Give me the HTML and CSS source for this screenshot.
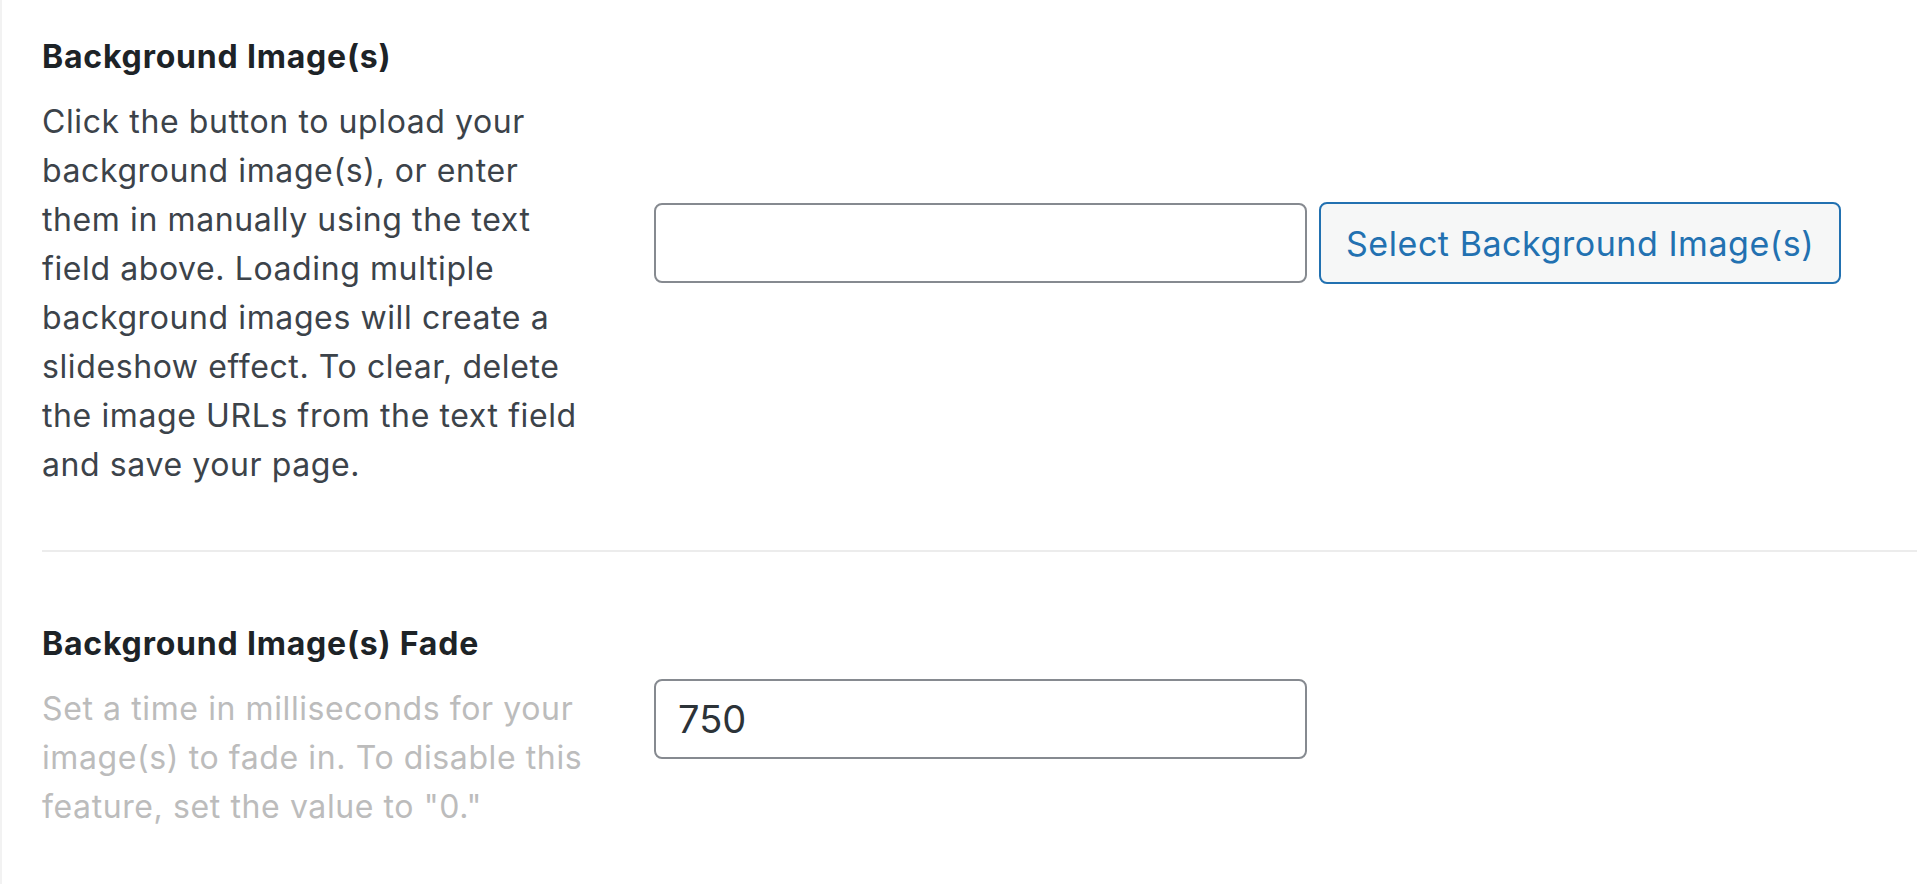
FILE: index.html
```html
<!DOCTYPE html>
<html lang="en">
<head>
<meta charset="utf-8">
<title>Background Image Settings</title>
<link rel="stylesheet" href="styles.css">
</head>
<body>
<div class="panel">
  <div class="row row-first">
    <div class="label-col">
      <h3 class="label">Background Image(s)</h3>
      <p class="desc">Click the button to upload your background image(s), or enter them in manually using the text field above. Loading multiple background images will create a slideshow effect. To clear, delete the image URLs from the text field and save your page.</p>
    </div>
    <div class="field-col field-first">
      <input class="text-input" type="text" value="">
      <button class="btn" type="button">Select Background Image(s)</button>
    </div>
  </div>
  <div class="row row-second">
    <div class="label-col">
      <h3 class="label">Background Image(s) Fade</h3>
      <p class="desc desc-muted">Set a time in milliseconds for your image(s) to fade in. To disable this feature, set the value to "0."</p>
    </div>
    <div class="field-col field-second">
      <input class="text-input" type="text" value="750">
    </div>
  </div>
</div>
</body>
</html>
```

FILE: styles.css
```css
html, body {
  margin: 0;
  padding: 0;
  background: #ffffff;
}

body {
  font-family: Inter, "Noto Sans", "Liberation Sans", sans-serif;
  color: #3c434a;
}

.panel {
  border-left: 2px solid #f2f2f2;
  padding-left: 40px;
  min-height: 884px;
  box-sizing: border-box;
}

.row {
  display: flex;
  align-items: flex-start;
}

.row-first {
  padding-top: 37px;
  padding-bottom: 61px;
  border-bottom: 2px solid #ececec;
}

.row-second {
  padding-top: 72px;
}

.label-col {
  width: 612px;
  flex: none;
}

.label {
  margin: 0;
  font-size: 32px;
  line-height: 40px;
  font-weight: 700;
  letter-spacing: 0.8px;
  color: #1d2327;
}

.desc {
  margin: 20px 0 0;
  max-width: 550px;
  font-size: 32px;
  line-height: 49px;
  letter-spacing: 0.6px;
  color: #3c434a;
}

.desc-muted {
  color: #bcbcbc;
}

.field-col {
  display: flex;
  gap: 12px;
}

.field-first {
  padding-top: 166px;
}

.field-second {
  padding-top: 55px;
}

.text-input {
  box-sizing: border-box;
  width: 653px;
  height: 80px;
  border: 2px solid #868a90;
  border-radius: 8px;
  background: #fff;
  padding: 0 22px;
  font-family: inherit;
  font-size: 38px;
  color: #2c3338;
  outline: none;
}

.btn {
  box-sizing: border-box;
  height: 82px;
  padding: 0 25px;
  border: 2px solid #2271b1;
  border-radius: 8px;
  background: #f6f7f7;
  color: #2271b1;
  font-family: inherit;
  font-size: 34px;
  letter-spacing: 0.55px;
  white-space: nowrap;
  margin-top: -1px;
}
```
